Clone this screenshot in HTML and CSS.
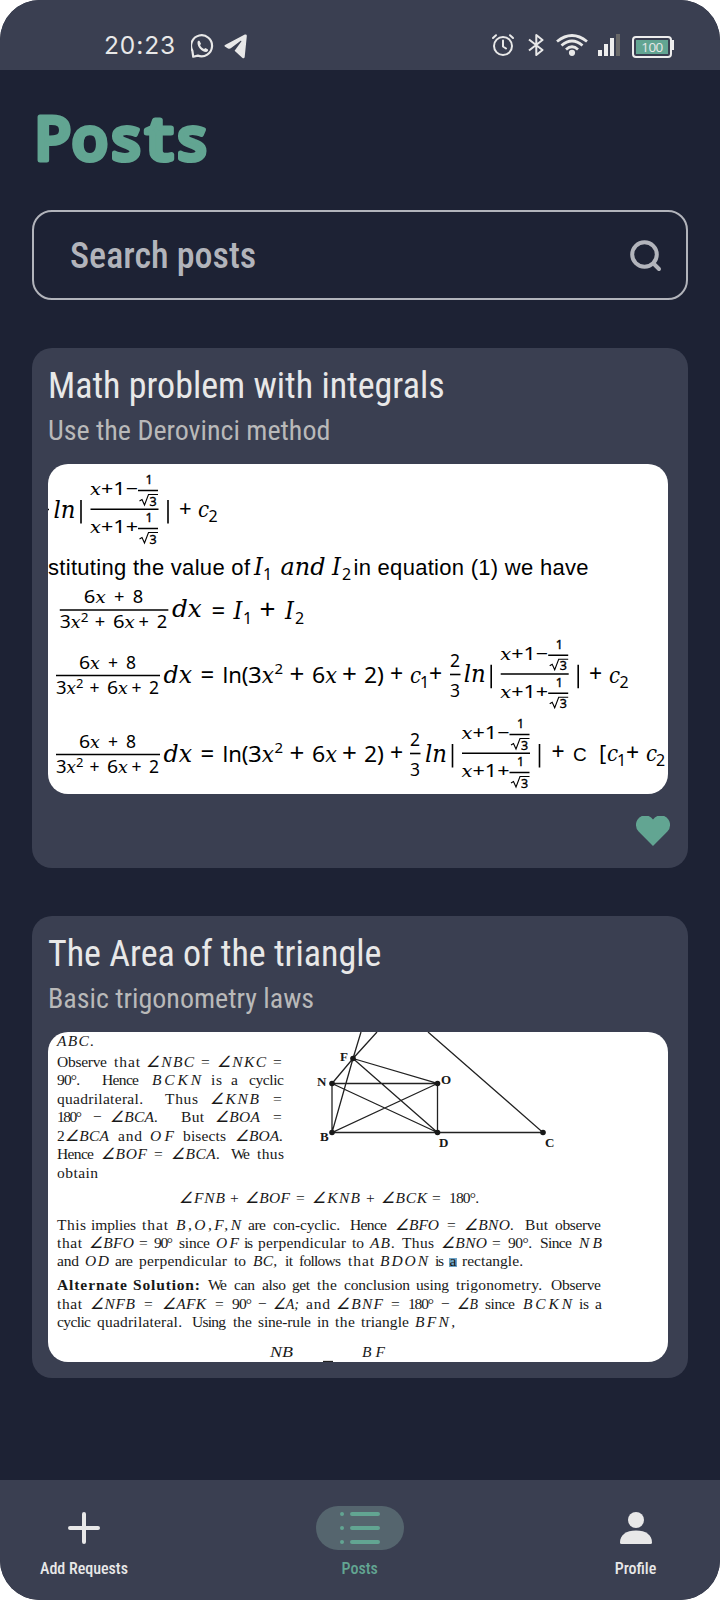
FILE: index.html
```html
<!DOCTYPE html>
<html lang="en">
<head>
<meta charset="utf-8">
<title>Posts</title>
<link rel="stylesheet" href="styles.css">
</head>
<body>
<div class="phone">
  <header class="status">
    <div class="status-left">
      <span class="clock">20:23</span>
      <svg class="whatsapp" viewBox="0 0 24 24" width="24" height="24"><path d="M2.2 22.7 1.4 16.9A10.5 10.5 0 1 1 6.9 21.6Z" fill="none" stroke="#e8e8e8" stroke-width="2.200" stroke-linejoin="round"/><path d="M6.500 8.200C6.800 6.900 8 6.500 8.700 7.200L10 9.700 9.100 11.300C10 13 11.200 14.200 13 15L14.500 14 17 15.400C17.600 16.300 16.500 17.800 15 17.900 10.600 17.700 6.200 12.800 6.500 8.200Z" fill="#e8e8e8"/></svg>
      <svg class="telegram" viewBox="0 0 24 25" width="24" height="25"><path d="M.8 12.400Q0 11.700 1 11L20.800.6Q23 0 22.800 2.200L20.700 23Q20.200 25.200 18.200 23.800L10.600 16.800 17.500 7.200Q17.500 6.500 16.700 6.800L6.800 14.300Q5.500 15 4 14.400Z" fill="#e8e8e8"/></svg>
    </div>
    <div class="status-right">
      <svg viewBox="0 0 22 22" width="22" height="22" fill="none" stroke="#e8e8e8" stroke-width="2" stroke-linecap="round" stroke-linejoin="round"><circle cx="11" cy="12" r="9"/><path d="M11 6.500V12.500L14 14.500M1 4 4 1.200M18 1.200 21 4"/></svg>
      <svg class="bluetooth" viewBox="0 0 16 22" width="16" height="22" fill="none" stroke="#e8e8e8" stroke-width="2" stroke-linejoin="round"><path d="M1 5.500 14.500 16 8.300 21V1L14.500 6 1 16.500"/></svg>
      <svg class="wifi" viewBox="0 0 32 22" width="32" height="22" fill="none" stroke="#e8e8e8" stroke-width="2.800"><path d="M1 7.500Q16-4.500 31 7.500M5.500 11.500Q16 2.500 26.500 11.500M10 15.500Q16 10 22 15.500"/><circle cx="16" cy="18.800" r="3.100" fill="#e8e8e8" stroke="none"/></svg>
      <svg class="signal" viewBox="0 0 22 22" width="22" height="22"><path d="M0 16H4V22H0ZM6 10H10V22H6ZM12 4H16V22H12Z" fill="#ededed"/><path d="M18 0H22V22H18Z" fill="#696969"/></svg>
      <div class="battery"><span>100</span></div>
    </div>
  </header>

  <main class="content">
    <h1 class="page-title">
      <svg viewBox="32 90 200 100" width="200" height="100"><text y="159.500"><tspan x="34.500">P</tspan><tspan x="71.500">o</tspan><tspan x="111.500">s</tspan><tspan x="145.500" textLength="27.500" lengthAdjust="spacingAndGlyphs">t</tspan><tspan x="177.500">s</tspan></text></svg>
    </h1>
    <div class="search">
      <span>Search posts</span>
      <svg viewBox="0 0 32 32" width="32" height="32" fill="none" stroke="#b2b4bb" stroke-width="4" stroke-linecap="round"><circle cx="14.500" cy="14.500" r="12.300"/><path d="M24 24 29 29"/></svg>
    </div>

    <article class="card card-liked">
      <h2>Math problem with integrals</h2>
      <p>Use the Derovinci method</p>
      <svg class="figure math" viewBox="48 464 620 330" width="620" height="330">
        <defs>
          <g id="log">
            <text class="v" x="53.500" y="517.500" font-size="25" textLength="22" lengthAdjust="spacingAndGlyphs">ln</text>
            <path class="r" d="M81 500V523.500M168 500V523.500"/>
            <text x="90" y="495" font-size="17.500" textLength="48" lengthAdjust="spacingAndGlyphs"><tspan class="v">x</tspan>+1−</text>
            <text x="90" y="533" font-size="17.500" textLength="48" lengthAdjust="spacingAndGlyphs"><tspan class="v">x</tspan>+1+</text>
            <path class="r" d="M90.500 509.300H158.500M138 490.500H158M138 528.500H158"/>
            <path class="t" d="M139.500 501 142 499.500 144.500 505 148.500 494.500H158M139.500 539 142 537.500 144.500 543 148.500 532.500H158"/>
            <g font-size="12.500" stroke="#000" stroke-width=".35"><text x="145.500" y="484">1</text><text x="145.500" y="522">1</text><text x="149.500" y="505.500">3</text><text x="149.500" y="543.500">3</text></g>
          </g>
          <g id="lhs">
            <text class="v" x="163.500" y="683" font-size="25" textLength="28.500" lengthAdjust="spacingAndGlyphs">dx</text>
            <path class="r" d="M56 675.500H160"/>
            <g font-size="17.500"><text x="79" y="669" textLength="21" lengthAdjust="spacingAndGlyphs">6<tspan class="v">x</tspan></text><text x="108" y="669">+</text><text x="126" y="669">8</text>
            <text x="56" y="693.500" textLength="20" lengthAdjust="spacingAndGlyphs">3<tspan class="v">x</tspan></text><text x="76" y="687.500" font-size="13">2</text><text x="89.500" y="693.500">+</text><text x="107" y="693.500" textLength="21" lengthAdjust="spacingAndGlyphs">6<tspan class="v">x</tspan></text><text x="131.500" y="693.500">+</text><text x="149" y="693.500">2</text></g>
          </g>
          <g id="row">
            <use href="#lhs"/>
            <text x="200.500" y="683" font-size="24">=</text><text x="222.500" y="683" textLength="26" lengthAdjust="spacingAndGlyphs">ln(</text><text x="248" y="683" textLength="26" lengthAdjust="spacingAndGlyphs">3<tspan class="v">x</tspan></text><text x="274.500" y="674" font-size="15">2</text><text x="289.500" y="683" font-size="26">+</text><text x="312" y="683" textLength="25" lengthAdjust="spacingAndGlyphs">6<tspan class="v">x</tspan></text><text x="342" y="683" font-size="26">+</text><text x="364" y="683" textLength="20" lengthAdjust="spacingAndGlyphs">2)</text>
            <text x="390" y="682" font-size="23">+</text>
          </g>
          <g id="two-thirds"><text x="450" y="667" font-size="17.500">2</text><text x="450" y="697" font-size="17.500">3</text><path class="r" d="M450 674.500H460.500"/></g>
        </defs>
        <path class="r" d="M48 509.500H49"/>
        <use href="#log"/>
        <text x="179" y="516">+</text><text class="v" x="198" y="517">c</text><text class="s" x="208.500" y="522">2</text>

        <text class="a" x="48" y="574.500" textLength="202">stituting the value of</text>
        <text class="v" x="254" y="574.500" font-size="25">I</text><text class="s" x="263" y="580">1</text>
        <text class="v" x="280.500" y="574.500" font-size="25" textLength="45" lengthAdjust="spacingAndGlyphs">and</text>
        <text class="v" x="332" y="574.500" font-size="25">I</text><text class="s" x="342" y="580">2</text>
        <text class="a" x="353.500" y="574.500" textLength="235">in equation (1) we have</text>

        <use href="#lhs" transform="translate(1.300 -65.500) scale(1.044 1)"/>
        <text x="211.500" y="618.500" font-size="24">=</text><text class="v" x="233.500" y="618.500" font-size="25">I</text><text class="s" x="243" y="624">1</text><text x="259.500" y="618.500" font-size="28">+</text><text class="v" x="285" y="618.500" font-size="25">I</text><text class="s" x="295" y="624">2</text>

        <use href="#row"/>
        <text class="v" x="410" y="683">c</text><text class="s" x="420" y="688">1</text><text x="429" y="682" font-size="23">+</text>
        <use href="#two-thirds"/>
        <use href="#log" x="410.200" y="164.700"/>
        <text x="589" y="682" font-size="23">+</text><text class="v" x="609" y="683">c</text><text class="s" x="619.500" y="688">2</text>

        <use href="#row" y="79"/>
        <use href="#two-thirds" x="-40" y="79"/>
        <use href="#log" x="371.500" y="244"/>
        <text x="551.500" y="760" font-size="23">+</text><text class="a" x="573" y="761" font-size="19">C</text><text x="599" y="761">[</text><text class="v" x="607" y="761">c</text><text class="s" x="617" y="766">1</text><text x="626" y="761" font-size="23">+</text><text class="v" x="646" y="761">c</text><text class="s" x="656" y="766">2</text>
      </svg>
      <svg class="heart" viewBox="0 0 34 30" width="34" height="30"><path d="M17 30 2.600 15.600A9 9 0 0 1 0 9.500 9.300 9.300 0 0 1 17 3.500 9.300 9.300 0 0 1 34 9.500 9 9 0 0 1 31.400 15.600Z" fill="#62a592"/></svg>
    </article>

    <article class="card">
      <h2>The Area of the triangle</h2>
      <p>Basic trigonometry laws</p>
      <svg class="figure proof" viewBox="48 1032 620 330" width="620" height="330">
        <text y="1045.700"><tspan class="v" x="57" textLength="37">ABC.</tspan></text>
        <text y="1067"><tspan x="57" textLength="50">Observe</tspan> <tspan x="114" textLength="26">that</tspan> <tspan class="v" x="146" textLength="48">∠NBC</tspan> <tspan x="201" textLength="10">=</tspan> <tspan class="v" x="217" textLength="49">∠NKC</tspan> <tspan x="273" textLength="10">=</tspan></text>
        <text y="1085"><tspan x="57" textLength="23">90°.</tspan> <tspan x="102" textLength="37">Hence</tspan> <tspan class="v" x="152" textLength="49">BCKN</tspan> <tspan x="211" textLength="11">is</tspan> <tspan x="231">a</tspan> <tspan x="249" textLength="35">cyclic</tspan></text>
        <text y="1104"><tspan x="57" textLength="86">quadrilateral.</tspan> <tspan x="165" textLength="33">Thus</tspan> <tspan class="v" x="210" textLength="49">∠KNB</tspan> <tspan x="273" textLength="10">=</tspan></text>
        <text y="1122"><tspan x="57" textLength="25">180°</tspan> <tspan x="93" textLength="10">−</tspan> <tspan class="v" x="110" textLength="48">∠BCA.</tspan> <tspan x="181" textLength="23">But</tspan> <tspan class="v" x="215" textLength="45">∠BOA</tspan> <tspan x="273" textLength="10">=</tspan></text>
        <text y="1141"><tspan x="57">2</tspan><tspan class="v" x="65" textLength="44">∠BCA</tspan> <tspan x="118" textLength="24">and</tspan> <tspan class="v" x="150" textLength="24">OF</tspan> <tspan x="183" textLength="43">bisects</tspan> <tspan class="v" x="235" textLength="48">∠BOA.</tspan></text>
        <text y="1158.500"><tspan x="57" textLength="37">Hence</tspan> <tspan class="v" x="101" textLength="46">∠BOF</tspan> <tspan x="154" textLength="10">=</tspan> <tspan class="v" x="171" textLength="49">∠BCA.</tspan> <tspan x="231" textLength="19">We</tspan> <tspan x="257" textLength="27">thus</tspan></text>
        <text y="1177.500"><tspan x="57" textLength="41">obtain</tspan></text>

        <text y="1203"><tspan class="v" x="179" textLength="46">∠FNB</tspan> <tspan x="230" textLength="10">+</tspan> <tspan class="v" x="245" textLength="45">∠BOF</tspan> <tspan x="296" textLength="10">=</tspan> <tspan class="v" x="312" textLength="48">∠KNB</tspan> <tspan x="366" textLength="10">+</tspan> <tspan class="v" x="381" textLength="46">∠BCK</tspan> <tspan x="432" textLength="10">=</tspan> <tspan x="449" textLength="30">180°.</tspan></text>

        <text y="1229.500"><tspan x="57" textLength="29">This</tspan> <tspan x="91" textLength="45">implies</tspan> <tspan x="142" textLength="26">that</tspan> <tspan class="v" x="176" textLength="65">B,O,F,N</tspan> <tspan x="248" textLength="18">are</tspan> <tspan x="273" textLength="67">con-cyclic.</tspan> <tspan x="350" textLength="37">Hence</tspan> <tspan class="v" x="395" textLength="44">∠BFO</tspan> <tspan x="447" textLength="10">=</tspan> <tspan class="v" x="464" textLength="50">∠BNO.</tspan> <tspan x="525" textLength="23">But</tspan> <tspan x="555" textLength="46">observe</tspan></text>
        <text y="1247.500"><tspan x="57" textLength="25">that</tspan> <tspan class="v" x="89" textLength="45">∠BFO</tspan> <tspan x="139" textLength="10">=</tspan> <tspan x="154" textLength="19">90°</tspan> <tspan x="179" textLength="31">since</tspan> <tspan class="v" x="216" textLength="23">OF</tspan> <tspan x="244" textLength="9">is</tspan> <tspan x="258" textLength="88">perpendicular</tspan> <tspan x="352" textLength="12">to</tspan> <tspan class="v" x="370" textLength="25">AB.</tspan> <tspan x="402" textLength="32">Thus</tspan> <tspan class="v" x="441" textLength="46">∠BNO</tspan> <tspan x="492" textLength="10">=</tspan> <tspan x="508" textLength="24">90°.</tspan> <tspan x="540" textLength="32">Since</tspan> <tspan class="v" x="579" textLength="23">NB</tspan></text>
        <path d="M449 1258H457V1267H449Z" fill="#6fa5c8"/>
        <text y="1266"><tspan x="57" textLength="22">and</tspan> <tspan class="v" x="85" textLength="24">OD</tspan> <tspan x="115" textLength="18">are</tspan> <tspan x="139" textLength="88">perpendicular</tspan> <tspan x="234" textLength="12">to</tspan> <tspan class="v" x="253" textLength="24">BC,</tspan> <tspan x="285" textLength="8">it</tspan> <tspan x="299" textLength="42">follows</tspan> <tspan x="348" textLength="26">that</tspan> <tspan class="v" x="380" textLength="48">BDON</tspan> <tspan x="435" textLength="9">is</tspan> <tspan x="449.500">a</tspan> <tspan x="462" textLength="61">rectangle.</tspan></text>
        <text y="1290"><tspan class="b" x="57" textLength="70">Alternate</tspan> <tspan class="b" x="133" textLength="67">Solution:</tspan> <tspan x="208" textLength="19">We</tspan> <tspan x="234" textLength="21">can</tspan> <tspan x="262" textLength="24">also</tspan> <tspan x="292" textLength="18">get</tspan> <tspan x="317" textLength="20">the</tspan> <tspan x="344" textLength="66">conclusion</tspan> <tspan x="416" textLength="33">using</tspan> <tspan x="456" textLength="86">trigonometry.</tspan> <tspan x="551" textLength="50">Observe</tspan></text>
        <text y="1308.500"><tspan x="57" textLength="25">that</tspan> <tspan class="v" x="90" textLength="45">∠NFB</tspan> <tspan x="144" textLength="10">=</tspan> <tspan class="v" x="162" textLength="44">∠AFK</tspan> <tspan x="215" textLength="10">=</tspan> <tspan x="232" textLength="20">90°</tspan> <tspan x="258" textLength="10">−</tspan> <tspan class="v" x="273" textLength="26" lengthAdjust="spacingAndGlyphs">∠A;</tspan> <tspan x="306" textLength="24">and</tspan> <tspan class="v" x="336" textLength="47">∠BNF</tspan> <tspan x="391" textLength="10">=</tspan> <tspan x="408" textLength="26">180°</tspan> <tspan x="441" textLength="10">−</tspan> <tspan class="v" x="457" textLength="21" lengthAdjust="spacingAndGlyphs">∠B</tspan> <tspan x="485" textLength="30">since</tspan> <tspan class="v" x="523" textLength="49">BCKN</tspan> <tspan x="579" textLength="10">is</tspan> <tspan x="595">a</tspan></text>
        <text y="1326.500"><tspan x="57" textLength="34">cyclic</tspan> <tspan x="97" textLength="85">quadrilateral.</tspan> <tspan x="192" textLength="34">Using</tspan> <tspan x="233" textLength="19">the</tspan> <tspan x="258" textLength="53">sine-rule</tspan> <tspan x="317" textLength="12">in</tspan> <tspan x="335" textLength="20">the</tspan> <tspan x="361" textLength="48">triangle</tspan> <tspan class="v" x="415" textLength="40">BFN,</tspan></text>
        <text y="1357"><tspan class="v" x="270" textLength="23" lengthAdjust="spacingAndGlyphs">NB</tspan> <tspan class="v" x="362" textLength="23">BF</tspan></text>
        <path class="d" d="M323 1361.500H333"/>

        <path class="d" d="M332 1132.500V1083.500H437.500V1132.500M332 1132.500H543L428 1032M332 1083.500 437.500 1132.500 353 1058.500 437.500 1083.500 332 1132.500 353 1058.500 361 1032M332 1083.500 353 1058.500 377 1032"/>
        <g><circle cx="353" cy="1058.500" r="2.800"/><circle cx="332" cy="1083.500" r="2.800"/><circle cx="332" cy="1132.500" r="2.800"/><circle cx="437.500" cy="1132.500" r="2.800"/><circle cx="437.500" cy="1083.500" r="2.800"/><circle cx="543" cy="1132.500" r="2.800"/></g>
        <g class="b" font-size="13"><text x="340" y="1061">F</text><text x="317" y="1086">N</text><text x="320" y="1140.500">B</text><text x="441" y="1084">O</text><text x="439" y="1147">D</text><text x="545" y="1147">C</text></g>
      </svg>
    </article>
  </main>

  <nav class="tabs">
    <div class="tab">
      <div class="tab-icon"><svg viewBox="0 0 32 32" width="32" height="32" stroke="#e8e8e8" stroke-width="4" stroke-linecap="round"><path d="M16 2V30M2 16H30"/></svg></div>
      <span>Add Requests</span>
    </div>
    <div class="tab active">
      <div class="tab-icon"><svg viewBox="0 0 40 32" width="40" height="32" stroke="#62a592" stroke-width="4" stroke-linecap="round"><path d="M12 2H38M12 16H38M12 30H38M2 2H2.010M2 16H2.010M2 30H2.010"/></svg></div>
      <span>Posts</span>
    </div>
    <div class="tab">
      <div class="tab-icon"><svg viewBox="0 0 32 32" width="32" height="32" fill="#e8e8e8"><circle cx="16" cy="8" r="8"/><path d="M0 30.500C0 23 6 18.500 16 18.500S32 23 32 30.500Q32 32 30.500 32H1.500Q0 32 0 30.500Z"/></svg></div>
      <span>Profile</span>
    </div>
  </nav>
</div>
</body>
</html>
```
FILE: styles.css
```css
* { box-sizing: border-box; }
body { margin: 0; background: #fff; }
h1, h2, p { margin: 0; }
svg { display: block; flex: none; }

.phone {
  width: 720px;
  height: 1600px;
  display: flex;
  flex-direction: column;
  overflow: hidden;
  border-radius: 40px;
  background: #1d2234;
  font-family: "Roboto Condensed", Roboto, sans-serif;
  font-stretch: 75%;
  color: #e8e8e8;
}

/* Status bar */
.status {
  height: 70px;
  flex: none;
  display: flex;
  justify-content: space-between;
  padding: 34px 46px 0 104px;
  background: #3a3f51;
}
.status-left, .status-right { display: flex; align-items: flex-start; }
.clock {
  width: 86.5px;
  font: 400 24.5px/23px Inter, sans-serif;
  letter-spacing: .9px;
}
.telegram { margin-left: 9.5px; }
.bluetooth { margin-left: 14px; }
.wifi { margin-left: 12px; }
.signal { margin-left: 10px; }
.battery {
  position: relative;
  width: 40px;
  height: 22px;
  margin: 2px 2px 0 12px;
  padding: 2px;
  border: 2px solid #ededed;
  border-radius: 4px;
}
.battery::after {
  content: "";
  position: absolute;
  left: 38px;
  top: 2px;
  width: 2px;
  height: 10px;
  background: #ededed;
}
.battery span {
  display: block;
  height: 14px;
  background: #62a592;
  font: 400 13.5px/14px "Open Sans", sans-serif;
  letter-spacing: -.5px;
  text-align: center;
}

.content {
  flex: 1;
  padding: 20px 32px 0;
}
.page-title {
  height: 100px;
  font: 500 60px "Noto Sans", sans-serif;
}
.page-title text {
  fill: #62a592;
  stroke: #62a592;
  stroke-width: 5px;
  stroke-linejoin: round;
}
.search {
  height: 90px;
  margin: 20px 0 48px;
  padding: 2px 24px 0 36px;
  display: flex;
  align-items: center;
  justify-content: space-between;
  border: 2px solid #b2b4bb;
  border-radius: 20px;
  font-size: 36px;
  font-weight: 500;
  color: #b2b4bb;
}

.card {
  height: 462px;
  padding: 16px 16px 0;
  border-radius: 20px;
  background: #3a3f51;
}
.card-liked { height: 520px; margin-bottom: 48px; }
.card h2 { font-size: 36px; line-height: 44px; font-weight: 400; }
.card p { padding-top: 1px; font-size: 28px; line-height: 44px; color: #b9b9b9; }
.figure {
  margin-top: 11px;
  border-radius: 20px;
  background: #fff;
  fill: #000;
}
.heart { margin: 22px 2px 0 auto; }

/* Figures inside the posts */
.math { font: 22px "Noto Sans", sans-serif; }
.math .v { font-family: "DejaVu Serif Condensed", "DejaVu Serif", serif; font-stretch: condensed; font-style: italic; }
.math .a { font-family: "Liberation Sans", sans-serif; }
.math .s { font-size: 16px; }
.r { stroke: #000; stroke-width: 1.6; fill: none; }
.t { stroke: #000; stroke-width: 1.1; fill: none; }
.proof { font: 15.5px "Liberation Serif", serif; fill: #181818; }
.proof .v { font-style: italic; }
.proof .b { font-weight: 700; }
.d { stroke: #222; stroke-width: 1.3; fill: none; }

/* Bottom navigation */
.tabs {
  height: 120px;
  flex: none;
  display: flex;
  justify-content: space-between;
  padding: 26px 40px 0 39.5px;
  background: #3a3f51;
}
.tab {
  width: 89px;
  display: flex;
  flex-direction: column;
  align-items: center;
  font-size: 16px;
  line-height: 20px;
  font-weight: 500;
  white-space: nowrap;
}
.tab-icon {
  width: 88px;
  height: 44px;
  margin-bottom: 9px;
  display: grid;
  place-items: center;
  border-radius: 22px;
}
.tab.active { color: #62a592; }
.tab.active .tab-icon { background: #55656e; }
```
